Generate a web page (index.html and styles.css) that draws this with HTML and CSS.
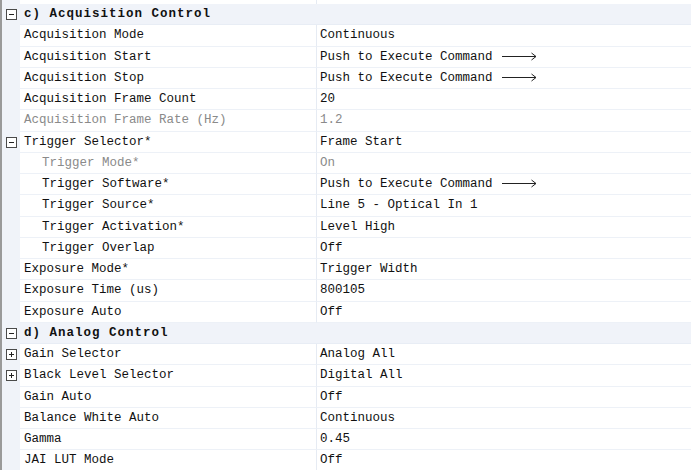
FILE: index.html
```html
<!DOCTYPE html>
<html>
<head>
<meta charset="utf-8">
<link rel="stylesheet" href="styles.css">
</head>
<body>
<div class="grid">
  <div class="row top"><div class="gut"></div><div class="name"></div><div class="val"></div></div>

  <div class="row cat"><div class="gut"><span class="box minus"></span></div><div class="catname">c) Acquisition Control</div></div>
  <div class="row"><div class="gut"></div><div class="name">Acquisition Mode</div><div class="val">Continuous</div></div>
  <div class="row"><div class="gut"></div><div class="name">Acquisition Start</div><div class="val">Push to Execute Command<svg class="arrow" width="36" height="12" viewBox="0 0 36 12"><path d="M0 5.5H34M29.5 2L34 5.5L29.5 9" fill="none" stroke="#222" stroke-width="1"/></svg></div></div>
  <div class="row"><div class="gut"></div><div class="name">Acquisition Stop</div><div class="val">Push to Execute Command<svg class="arrow" width="36" height="12" viewBox="0 0 36 12"><path d="M0 5.5H34M29.5 2L34 5.5L29.5 9" fill="none" stroke="#222" stroke-width="1"/></svg></div></div>
  <div class="row"><div class="gut"></div><div class="name">Acquisition Frame Count</div><div class="val">20</div></div>
  <div class="row dis"><div class="gut"></div><div class="name">Acquisition Frame Rate (Hz)</div><div class="val">1.2</div></div>
  <div class="row"><div class="gut"><span class="box minus"></span></div><div class="name">Trigger Selector*</div><div class="val">Frame Start</div></div>
  <div class="row dis"><div class="gut"></div><div class="name sub">Trigger Mode*</div><div class="val">On</div></div>
  <div class="row"><div class="gut"></div><div class="name sub">Trigger Software*</div><div class="val">Push to Execute Command<svg class="arrow" width="36" height="12" viewBox="0 0 36 12"><path d="M0 5.5H34M29.5 2L34 5.5L29.5 9" fill="none" stroke="#222" stroke-width="1"/></svg></div></div>
  <div class="row"><div class="gut"></div><div class="name sub">Trigger Source*</div><div class="val">Line 5 - Optical In 1</div></div>
  <div class="row"><div class="gut"></div><div class="name sub">Trigger Activation*</div><div class="val">Level High</div></div>
  <div class="row"><div class="gut"></div><div class="name sub">Trigger Overlap</div><div class="val">Off</div></div>
  <div class="row"><div class="gut"></div><div class="name">Exposure Mode*</div><div class="val">Trigger Width</div></div>
  <div class="row"><div class="gut"></div><div class="name">Exposure Time (us)</div><div class="val">800105</div></div>
  <div class="row"><div class="gut"></div><div class="name">Exposure Auto</div><div class="val">Off</div></div>

  <div class="row cat"><div class="gut"><span class="box minus"></span></div><div class="catname">d) Analog Control</div></div>
  <div class="row"><div class="gut"><span class="box plus"></span></div><div class="name">Gain Selector</div><div class="val">Analog All</div></div>
  <div class="row"><div class="gut"><span class="box plus"></span></div><div class="name">Black Level Selector</div><div class="val">Digital All</div></div>
  <div class="row"><div class="gut"></div><div class="name">Gain Auto</div><div class="val">Off</div></div>
  <div class="row"><div class="gut"></div><div class="name">Balance White Auto</div><div class="val">Continuous</div></div>
  <div class="row"><div class="gut"></div><div class="name">Gamma</div><div class="val">0.45</div></div>
  <div class="row"><div class="gut"></div><div class="name">JAI LUT Mode</div><div class="val">Off</div></div>
</div>
</body>
</html>
```
FILE: styles.css
```css
html, body {
  margin: 0;
  padding: 0;
  background: #ffffff;
  overflow: hidden;
}
.grid {
  width: 691px;
  height: 470px;
  overflow: hidden;
  border-left: 2px solid #9a9a9a;
  box-sizing: border-box;
  font-family: "Liberation Mono", "DejaVu Sans Mono", monospace;
  font-size: 12.5px;
  color: #111;
}
.row {
  display: flex;
  height: 21.25px;
  box-sizing: border-box;
  align-items: stretch;
}
.row.top {
  height: 4px;
}
.gut {
  width: 18px;
  flex: none;
  background: #f0f3f9;
  display: flex;
  align-items: center;
  justify-content: flex-start;
}
.name {
  width: 297px;
  flex: none;
  box-sizing: border-box;
  padding-left: 4px;
  border-right: 1px solid #e6ebf3;
  border-bottom: 1px solid #edf1f7;
  display: flex;
  align-items: center;
  white-space: nowrap;
}
.name.sub {
  padding-left: 22px;
}
.val {
  flex: 1;
  padding-left: 3px;
  border-bottom: 1px solid #edf1f7;
  display: flex;
  align-items: center;
  white-space: nowrap;
}
.top .name, .top .val {
  border-bottom: none;
}
.dis .name, .dis .val {
  color: #8a8a8a;
}
.cat {
  background: #f0f3f9;
}
.catname {
  flex: 1;
  padding-left: 4px;
  font-weight: bold;
  letter-spacing: 1px;
  display: flex;
  align-items: center;
  white-space: nowrap;
  border-bottom: 1px solid #e8edf5;
}
.box {
  width: 9px;
  height: 9px;
  border: 1px solid #4a4a4a;
  background: #fff;
  position: relative;
  margin-left: 4px;
}
.box::before {
  content: "";
  position: absolute;
  left: 2px;
  top: 4px;
  width: 5px;
  height: 1px;
  background: #222;
}
.box.plus::after {
  content: "";
  position: absolute;
  left: 4px;
  top: 2px;
  width: 1px;
  height: 5px;
  background: #222;
}
.arrow {
  margin-left: 9px;
  flex: none;
}
```
